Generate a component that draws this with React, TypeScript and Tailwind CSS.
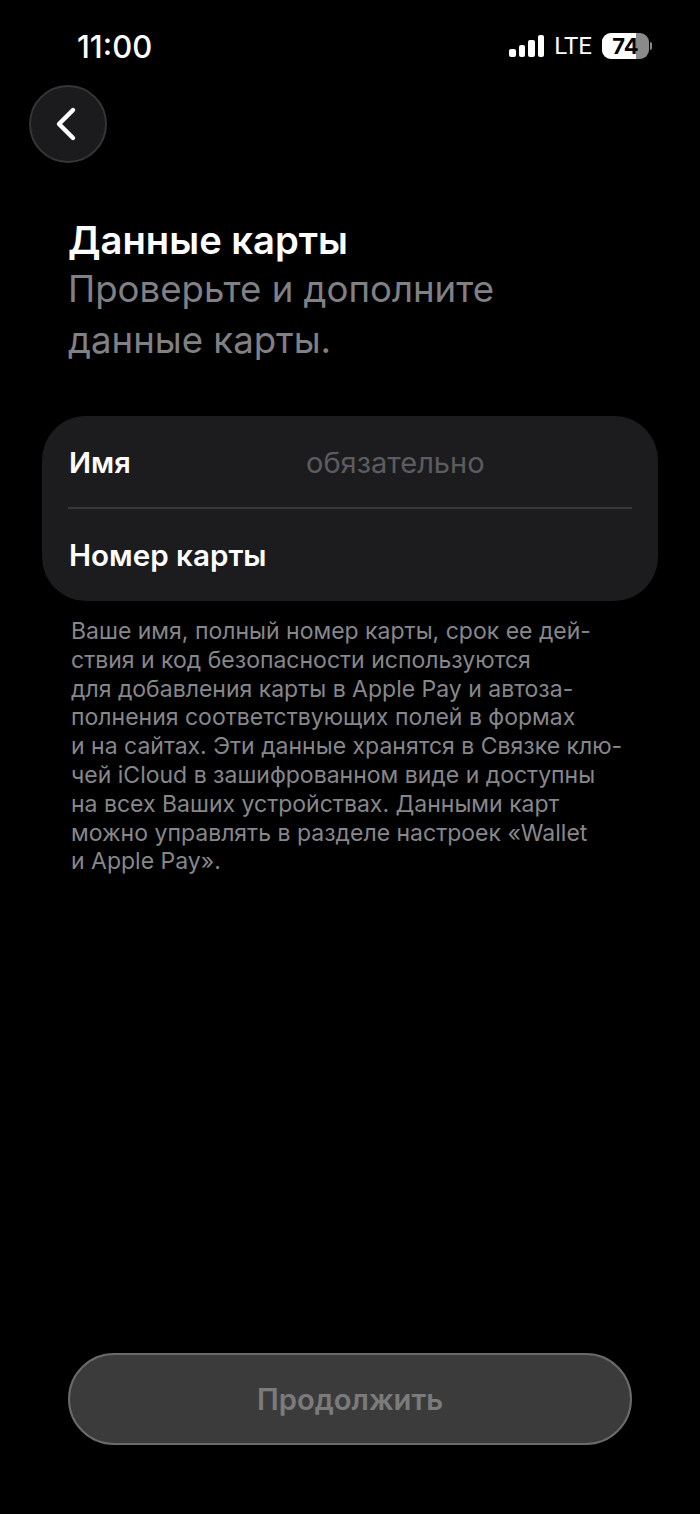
import { ChevronLeft } from 'lucide-react';

const NOTE_LINES = [
  'Ваше имя, полный номер карты, срок ее дей-',
  'ствия и код безопасности используются',
  'для добавления карты в Apple Pay и автоза-',
  'полнения соответствующих полей в формах',
  'и на сайтах. Эти данные хранятся в Связке клю-',
  'чей iCloud в зашифрованном виде и доступны',
  'на всех Ваших устройствах. Данными карт',
  'можно управлять в разделе настроек «Wallet',
  'и Apple Pay».',
];

function StatusBar() {
  return (
    <div className="flex h-[92px] items-center justify-between pl-[77px] pr-[48px]">
      <span className="text-[31px] font-medium leading-none text-white">11:00</span>
      <div className="flex items-center">
        <div className="flex items-end gap-[3px]">
          <span className="h-[8px] w-[6.5px] rounded-[2px] bg-white" />
          <span className="h-[12px] w-[6.5px] rounded-[2px] bg-white" />
          <span className="h-[17px] w-[6.5px] rounded-[2px] bg-white" />
          <span className="h-[22px] w-[6.5px] rounded-[2px] bg-white" />
        </div>
        <span className="ml-[10px] font-['Roboto',sans-serif] text-[24px] font-normal leading-none text-white">LTE</span>
        <div className="relative ml-[10px] flex h-[26px] w-[47px] items-center justify-center overflow-hidden rounded-[9px] bg-[#8a8a8a]">
          <div className="absolute inset-y-0 left-0 w-[34px] bg-white" />
          <span className="relative text-[22px] font-bold leading-none text-black">74</span>
        </div>
        <div className="ml-[1px] h-[8px] w-[2px] rounded-r-full bg-[#8a8a8a]" />
      </div>
    </div>
  );
}

export default function App() {
  return (
    <div className="flex h-[1514px] w-[700px] flex-col overflow-hidden bg-black font-['Inter',sans-serif]">
      <StatusBar />
      <div className="pl-[29px]">
        <button className="-mt-[7px] flex h-[78px] w-[78px] items-center justify-center rounded-full border-2 border-[#363638] bg-[#1b1b1d] text-white">
          <ChevronLeft size={56} strokeWidth={1.9} className="-ml-[5px]" />
        </button>
      </div>
      <div className="mt-[54px] pl-[68px]">
        <h1 className="text-[38.2px] font-semibold leading-[47px] text-white">Данные карты</h1>
        <p className="text-[36.6px] leading-[51px] text-[#808085]">
          Проверьте и дополните
          <br />
          данные карты.
        </p>
      </div>
      <div className="mx-[42px] mt-[50px] h-[185px] rounded-[44px] bg-[#1c1c1e] px-[26px]">
        <div className="flex h-[93px] items-center border-b-2 border-[#38383a] pt-[2px]">
          <span className="w-[238px] pl-[1px] text-[29px] font-semibold text-white">Имя</span>
          <span className="text-[29px] text-[#5c5c60]">обязательно</span>
        </div>
        <div className="flex h-[90px] items-center pl-[1px] pt-[2px] text-[29.6px] font-semibold text-white">
          Номер карты
        </div>
      </div>
      <div className="mt-[16px] pl-[71px] text-[23px] leading-[28.8px] text-[#87878b]">
        {NOTE_LINES.map((line) => (
          <div key={line} className="whitespace-nowrap">
            {line}
          </div>
        ))}
      </div>
      <div className="mt-auto mb-[69px] px-[68px]">
        <button className="flex h-[92px] w-full items-center justify-center rounded-[46px] border-2 border-[#6a6a6a] bg-[#3b3b3b] pt-[2px] text-[29.2px] font-semibold text-[#7b7b7b]">
          Продолжить
        </button>
      </div>
    </div>
  );
}
